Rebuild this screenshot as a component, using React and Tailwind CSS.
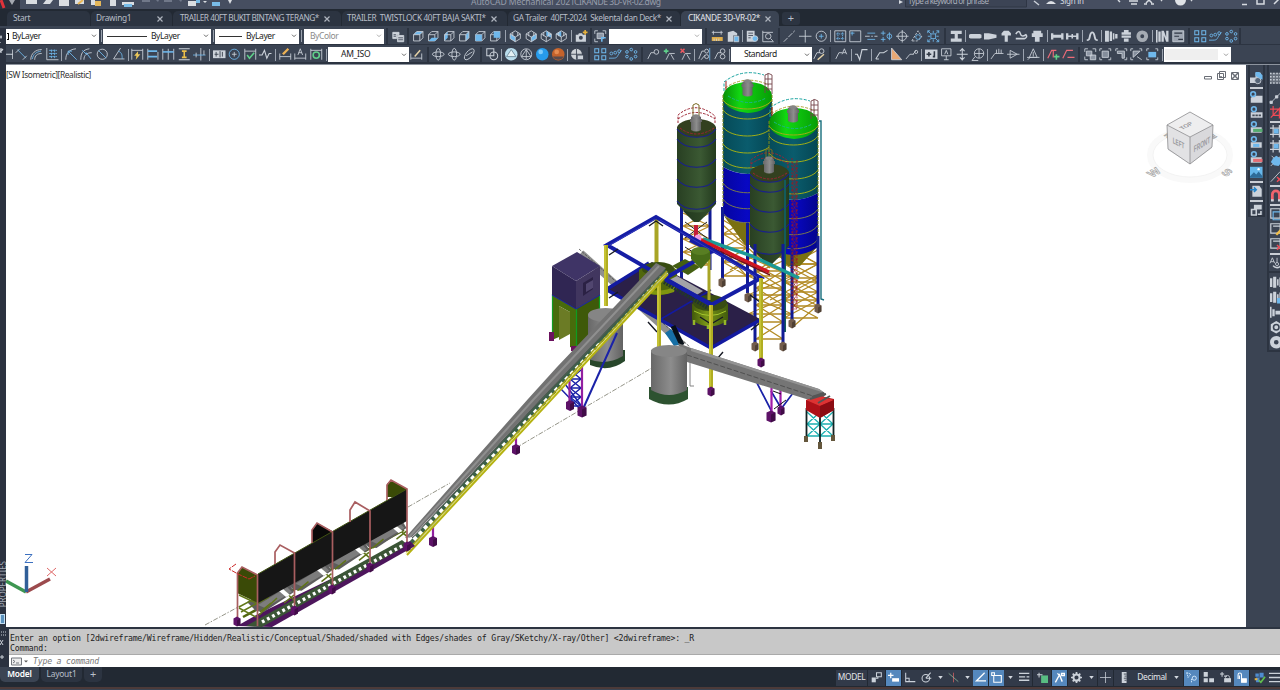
import React from "react";

const W = "#ccd2da";
const B = "#6fb8ec";

const cubeBase = (
  <path d="M2 6l4-4h8v8l-4 4H2zM2 6h8v8M10 6l4-4" />
);
const isoBase = <path d="M8 1l6.500 4v6L8 15l-6.500-4V5zM1.500 5L8 9l6.500-4M8 9v6M4.800 3v5M11.200 3v5" />;
const leader = <path d="M1 14L5 6h4" />;

const GLYPHS = {
  copy: <g><path fill={W} d="M1 3h8v3H6v5H1zM7 7h8v8H7z" /><path stroke="#3b4453" d="M8 10h6M8 12.500h6M2 6h3M2 8h3" /></g>,
  cubeTop: <g><path fill={B} stroke="none" d="M2 6l4-4h8l-4 4z" />{cubeBase}</g>,
  cubeBottom: <g>{cubeBase}<path fill={B} stroke="none" d="M2 14l4-4h8l-4 4z" /></g>,
  cubeLeft: <g><path fill={B} stroke="none" d="M2 6l4-4v8l-4 4z" />{cubeBase}</g>,
  cubeRight: <g><path fill={B} stroke="none" d="M10 6l4-4v8l-4 4z" />{cubeBase}</g>,
  cubeFront: <g>{cubeBase}<path fill={B} stroke="none" d="M2 6h8v8H2z" /></g>,
  cubeBack: <g>{cubeBase}<path fill={B} stroke="none" d="M6 2h8v8H6z" /></g>,
  isoA: <g><path fill={B} stroke="none" d="M1.500 5L8 9v6l-6.500-4z" />{isoBase}</g>,
  isoB: <g><path fill={B} stroke="none" d="M8 9l6.500-4v6L8 15z" />{isoBase}</g>,
  isoC: <g><path fill={B} stroke="none" d="M8 1l6.500 4v5L8 7z" />{isoBase}</g>,
  isoD: <g><path fill={B} stroke="none" d="M8 1v8L1.500 5z" />{isoBase}</g>,
  camera: <g><path fill={W} stroke="none" d="M1 6h3l1-2h4l1 2h4v9H1z" /><circle cx="7.500" cy="10" r="2.500" fill="#3b4453" stroke="none" /><path stroke="#e8b23c" strokeWidth="2" d="M13 0v6M10 3h6" /></g>,
  frame: <g><path d="M1 5V1h4M11 1h4v4M1 11v4h4" /><path fill="#8e97a5" d="M4 4h8v7H4z" /><path fill={B} stroke="none" d="M9 9h6v2h-4v4H9z" /></g>,
  ruler: <g><path fill="#e0ae4a" stroke="none" d="M1 9h14v5H1z" /><path fill={W} d="M1 3h14M3 1v5M13 1v5M4 11v3M7 11v3M10 11v3" /></g>,
  palette: <g><path fill={W} stroke="none" d="M1 3l7-2 5 3v3H8v8H1z" /><path fill={B} d="M9 8h6v7H9z" /></g>,
  list: <g><path fill={W} stroke="none" d="M1 1h10v14H1z" /><path stroke="#3b4453" d="M3 4h6M3 7h6M3 10h3" /><circle cx="11.500" cy="11" r="3.600" fill={B} /></g>,
  magnify: <g><path d="M1 1v14h14M1 3h13" /><circle cx="8" cy="8" r="3.500" /><path d="M11 11l3 3" /></g>,
  line: <path d="M1 15L15 1" strokeDasharray="7 1.500" />,
  plus: <path d="M8 0v16M0 8h16" />,
  circ: <g><circle cx="8" cy="8" r="6.500" /><path stroke={B} d="M8 5v6M5 8h6" /></g>,
  grid: <g><path d="M1 1h14v14H1z" /><path stroke={B} d="M5 3v10M11 3v10M3 5h10M3 11h10" strokeDasharray="2 1" /></g>,
  square: <g><path d="M1 1h14v14H1z" /><path stroke={B} d="M4 2v5M2 4h5" /></g>,
  dashes: <g><path stroke={B} d="M3 4h10M3 12h10" /><path d="M0 8h6M8 8h2M12 8h4" /></g>,
  points: <g stroke={B}><path d="M1 4h6M4 1v6M1 12h6M4 9v6" /><circle cx="12" cy="8" r="3" /><path d="M12 3v10" /></g>,
  target: <g><circle cx="8" cy="8" r="5.500" /><path d="M8 0v16M0 8h16" /></g>,
  rot: <g><path d="M1 14L9 1l5 8-6 5z" strokeDasharray="3 1.500" /><circle cx="9" cy="9" r="3" stroke={B} /></g>,
  burst: <g stroke={B}><path d="M1 1l4 4M15 1l-4 4M1 15l4-4M15 15l-4-4M8 1v3M8 12v3M1 8h3M12 8h3" /><path d="M5 5h6v6H5z" /><path d="M1 4V1h3M12 1h3v3M1 12v3h3M12 15h3v-3" /></g>,
  beam: <path fill={W} stroke="none" d="M1 1h14v4h-5v6h5v4H1v-4h5V5H1z" />,
  bolt: <path fill={W} stroke="none" d="M0 6l2-1h12l2 1v4l-2 1H2l-2-1z" />,
  bolt2: <path fill={W} stroke="none" d="M0 4h6l10 2v4L6 12H0z" />,
  screw: <path fill={W} stroke="none" d="M2 4l3-3h6l3 3v3h-4v8H6V7H2z" />,
  pin: <path strokeWidth="2" d="M1 5c3-4 5-4 6 0s4 3 7 1c2 2 0 5-2 5H1" />,
  nut: <path fill={W} stroke="none" d="M3 1h10v3h2v5h-4v6H5V9H1V4h2z" />,
  shaft: <path fill={W} stroke="none" d="M0 4h3v2h10V4h3v8h-3v-2H3v2H0z" />,
  shaft2: <path fill={W} stroke="none" d="M0 4h3v3h4V5h2v2h4V4h3v8h-3V9H9v2H7V9H3v3H0z" />,
  spring: <path strokeWidth="2.400" d="M1 13c3 0 3-1 4-5s1-5 3-5 2 1 3 5 1 5 4 5" />,
  gear3: <path fill={W} stroke="none" d="M0 1h5v14H0zM6 2h3v12H6zM10 4h2v8h-2zM13 5h3v6h-3z" />,
  stack: <path fill={W} stroke="none" d="M5 0h6v3h3v3H2V3h3zM2 7h12v3H2zM5 11h6v4H5z" />,
  ring: <circle cx="8" cy="8" r="5" stroke="#a5abb3" strokeWidth="5" />,
  plates: <path fill={W} stroke="none" d="M0 0h2v16H0zM3 2h3v13H3zM7 1h3l3 8V1h3v14h-3L10 7v8H7z" />,
  box: <g><path fill="#9ea6b2" d="M1 1h14v14H1z" /><path stroke="#303845" d="M3 4h10M3 8h6M8 12h6" strokeWidth="1.500" /></g>,
  tiles: <g stroke={B} strokeWidth="1.300"><path d="M1 1h5v5H1zM10 1h5v5h-5zM1 10h5v5H1zM10 10h5v5h-5z" /></g>,
  wave: <g stroke={B}><path d="M0 13h5c7 0 4-2 11-10" /><circle cx="3" cy="7" r="1.800" /><circle cx="8" cy="6" r="1.800" /><circle cx="13" cy="4" r="1.800" /></g>,
  dots: <g stroke={B} strokeWidth="1.200"><circle cx="8" cy="2" r="1.700" /><circle cx="13.500" cy="5" r="1.700" /><circle cx="13.500" cy="11" r="1.700" /><circle cx="8" cy="14" r="1.700" /><circle cx="2.500" cy="11" r="1.700" /><circle cx="2.500" cy="5" r="1.700" /></g>,
  dimA: <g><path d="M3 2l11 11" stroke={B} /><path d="M1 6l5-5M10 15l5-5" /></g>,
  arc: <g><path d="M1 15C1 7 7 2 15 2M6 15c0-5 3-8 9-8" /><path stroke={B} d="M3 14C4 8 8 5 14 4" /></g>,
  ord: <g><path d="M1 0v15h15" /><path stroke={B} d="M4 3h10M4 7h10M4 11h10M7 2v11M11 2v11" strokeDasharray="3 1" /></g>,
  rad: <g><path d="M14 1C4 2 1 8 1 15" /><path stroke={B} d="M4 4l11 11M4 9V4h5" /></g>,
  jog: <g><path d="M12 1C3 2 1 8 1 15M5 15c0-6 4-9 10-9" /><path stroke={B} d="M3 3l5 5v-2l6 8" /></g>,
  dia: <g><circle cx="8" cy="8" r="6.500" /><path stroke={B} d="M3 3l10 10" /></g>,
  ang: <g><path d="M11 0L2 14h14" /><path stroke={B} d="M8 4c5 2 5 5 5 10" /></g>,
  quick: <g><path d="M1 1v14M15 1v14M1 3h14" /><path fill="#ecc85a" stroke="none" d="M9 4l-5 6h3l-1 5 6-7H9z" /></g>,
  base: <g><path d="M1 1v14M14 5v10" /><path stroke={B} d="M1 4h12M1 11h12" strokeWidth="2" /></g>,
  cont: <g><path d="M1 1v14M8 1v14M15 1v14" /><path stroke={B} d="M1 5h14" strokeWidth="2" /></g>,
  space: <g><path d="M1 1h14M1 15h14" strokeWidth="1.500" /><path stroke="#ecc04a" strokeWidth="2" d="M8 3v10M5 4h6M5 12h6" /></g>,
  brk: <g><path d="M10 0v16" /><path stroke={B} d="M0 9h16" /><path d="M4 6v6M14 3v6" /></g>,
  tol: <g><path fill={W} stroke="none" d="M0 3h16v10H0z" /><path stroke="#303845" d="M2 8h5M4 5v6M9 4v8M12 5v6" /></g>,
  center: <g><circle cx="8" cy="8" r="6.500" stroke={B} /><path d="M8 5v6M5 8h6" /></g>,
  check: <g><path d="M1 1v14M15 1v14M1 4h14" /><path stroke="#5fd08a" strokeWidth="2" d="M4 9l3 4 6-7" /></g>,
  zig: <path strokeWidth="1.400" d="M0 9h4l3-6 3 10 3-6h3" />,
  dimEdit: <g><path d="M1 7v8M15 7v8M1 11h14" /><path stroke="#eeb254" strokeWidth="3" d="M5 8l7-7" /></g>,
  dimText: <g><path d="M1 7v8M15 7v8M1 13h14" /><path d="M5 9l3-8 3 8M6 6h4" /></g>,
  dimRef: <g><path d="M1 1v14M15 1v14M1 3h14" /><circle cx="8" cy="9" r="4" stroke="#5fd08a" strokeWidth="2" /></g>,
  brush: <g><path d="M1 7v8M15 7v8M1 13h14" /><path stroke="#e6d3a7" strokeWidth="2" d="M6 11l7-8" /></g>,
  orbit: <g><ellipse cx="8" cy="8" rx="7.500" ry="3" /><ellipse cx="8" cy="8" rx="3" ry="7.500" /></g>,
  orbit2: <g><ellipse cx="8" cy="8" rx="8.500" ry="4" transform="rotate(-50 8 8)" /><path d="M4 10l8-5" /></g>,
  shapes: <g strokeWidth="1.300"><path d="M1 1h9v9H1z" /><circle cx="10" cy="10" r="5" /></g>,
  ballIce: <g><circle cx="8" cy="8" r="8" fill="#b9dded" stroke="none" /><path stroke="#6c8798" d="M8 2l6 9H2z" fill="#e4f1f5" /></g>,
  ballWire: <g><circle cx="8" cy="8" r="7" /><path d="M8 2l6 9H2zM8 2v12" /></g>,
  ballBlue: <g><circle cx="8" cy="8" r="8" fill="#279bea" stroke="none" /><circle cx="6" cy="5" r="3" fill="#7ccaf9" stroke="none" /></g>,
  ballOrange: <g><circle cx="8" cy="8" r="8" fill="#c4622b" stroke="none" /><path d="M1 11h14a8 8 0 01-14 0" fill="#584b4d" stroke="none" /><circle cx="6" cy="5" r="3" fill="#e48b50" stroke="none" /></g>,
  ballSet: <g><circle cx="7" cy="8" r="7" fill="#cfd3d8" stroke="none" /><path d="M7 1v14M0 8h14" stroke="#3b4453" /><path fill={W} stroke="#3b4453" d="M8 9h8v6H8z" /></g>,
  lead: <g>{leader}<circle cx="12" cy="5" r="3" /></g>,
  leadAdd: <g><path d="M4 15l4-8h7M10 8l4 7" /><path stroke="#5fd08a" strokeWidth="2" d="M4 1v6M1 4h6" /></g>,
  leadDel: <g><path d="M4 15l4-8h7M10 8l4 7" /><path stroke="#ea5a62" strokeWidth="2" d="M2 1l5 5M7 1L2 6" /></g>,
  leadAl: <g><path d="M1 14L5 4h3M4 15l5-6" /><circle cx="11" cy="4" r="2.500" /><circle cx="11" cy="11" r="2.500" /><path stroke={B} d="M15 0v16" /></g>,
  leadCol: <g>{leader}<circle cx="11" cy="4" r="3" /><circle cx="11" cy="11" r="3" /></g>,
  leadBr: <g>{leader}<circle cx="11" cy="4" r="3" /><path stroke="#e6d3a7" strokeWidth="2" d="M6 15l8-7" /></g>,
  leadText: <g>{leader}<path d="M9 8l3-7 3 7M10 6h4" /></g>,
  root: <path strokeWidth="1.500" d="M0 8h3l3 7L9 2h7" />,
  weld: <path strokeWidth="1.300" d="M1 14L6 6h5l5-3M1 14h4" />,
  edge: <path fill="#e9a873" stroke={W} d="M2 0v15h13z" />,
  noteA: <g><path d="M0 14l5-6h5M9 8l4-5" /><circle cx="13" cy="5" r="2" /></g>,
  datum: <g><path fill={W} stroke="none" d="M0 2h16v12H0z" /><path stroke="#303845" strokeWidth="2" d="M2 8h6M5 5v6M12 4v7h-2" /></g>,
  datumA: <g><path d="M2 1h12v9H2zM8 10v5M5 15h6M6 8l2-5 2 5" /></g>,
  surf: <path strokeWidth="1.300" d="M8 0v16M1 8h14M5 4l3-3 3 3M5 12l3 3 3-3" />,
  feat: <g><circle cx="9" cy="7" r="6" /><path d="M9 1v12M3 7h12M4 11l-4 5h8" /></g>,
  seam: <g><path d="M0 14l5-7h11M7 2v5M10 1v6M13 2v5" /></g>,
  arrowR: <path d="M0 8h16M4 3l9 5-9 5z" />,
  tri: <g><path d="M3 12L8 1l5 11zM0 12h16M8 5v6M1 15l3-3" /></g>,
  balAdd: <g stroke="#ed6b78"><path strokeWidth="1.500" d="M1 13L6 3h6M8 3v9" /><path stroke="#5fd08a" strokeWidth="2" d="M12 8v7M9 11h7" /></g>,
  balDel: <g stroke="#ed6b78"><path strokeWidth="1.500" d="M1 13L6 3h8M7 12h9" /></g>,
  grp: <g><path d="M1 5V1h4M1 11v4h4M15 5V1h-4" /><path fill="#8e97a5" d="M3 4h7v6H3zM8 9h7v6H8z" /></g>,
  grp2: <g><path d="M1 4V1h3M12 1h3v3M1 12v3h3M12 15h3v-3" /><path fill="#848d9b" d="M4 4h8v8H4z" /></g>,
  grp3: <g><path d="M1 4V1h3M12 1h3v3M12 15h3v-3" /><path fill="#848d9b" d="M3 4h9v9H9V7H3z" /></g>,
  grp4: <g><path d="M1 4V1h3M12 1h3v3M1 12v3h3" /><path fill="#848d9b" d="M4 4h9l-9 8zM9 11l6 4" /></g>,
  grp5: <g><path d="M1 4V1h3M12 1h3v3M1 12v3h3M12 15h3v-3" /><path fill={B} stroke="none" d="M3 5h10v7H3z" /></g>,
  snap: <path strokeWidth="1.300" d="M1 2v12M15 2v12M1 8h14" />,
  layers: <g><path fill={W} stroke="none" d="M0 7h9v7H0zM7 1h7v9H7z" /><circle cx="10" cy="11" r="4" fill="#566476" /><path fill={B} stroke="none" d="M7 0h5l4 4v6l-9-5z" /></g>,
  link: <g><path fill={W} stroke="none" d="M4 6h12v9H1V9z" /><circle cx="4" cy="4" r="3" stroke={B} strokeWidth="2" /></g>,
  linkG: <g><path fill={W} stroke="none" d="M1 8h14v7H1z" /><path fill="#55ab6f" stroke="none" d="M4 10h12v4H4z" /><circle cx="5" cy="4" r="3" stroke={B} strokeWidth="2" /></g>,
  linkB: <g><path fill={W} stroke="none" d="M1 8h14v7H1z" /><path fill={B} stroke="none" d="M4 10h8v4H4z" /><circle cx="5" cy="4" r="3" stroke={B} strokeWidth="2" /></g>,
  linkR: <g><path fill={W} stroke="none" d="M1 8h14v7H1z" /><path fill="#e46d74" stroke="none" d="M4 10h12v4H4z" /><circle cx="5" cy="4" r="3" stroke={B} strokeWidth="2" /></g>,
  dwg: <g><path fill={W} stroke="none" d="M1 8h15v7H1z" /><path stroke="#454c57" strokeWidth="2" d="M3 12h11" strokeDasharray="3 1" /><circle cx="5" cy="4" r="3" stroke={B} strokeWidth="2" /></g>,
  image: <g><path fill="#66b7eb" stroke="none" d="M0 1h16v14H0z" /><path fill="#2e6c99" stroke="none" d="M0 13l5-5 3 3 3-4 5 6v2H0z" /><circle cx="11" cy="4" r="1.500" fill="#fff" stroke="none" /></g>,
  import: <g><path fill={W} stroke="none" d="M3 1h9l3 4v10H3z" /><path stroke="#2584c9" strokeWidth="2" d="M0 6h8M5 3l3 3-3 3" /></g>,
  exportI: <g><path fill={W} stroke="none" d="M5 1h10v6H5z" /><path stroke={W} strokeWidth="2" d="M2 7h6v7H2zM10 13h4V9" /></g>,
  hatch: <g><path d="M0 1h16v14H0z" fill="#676f7b" stroke="none" /><path d="M0 2h16M0 6h16M0 10h16M0 14h16" strokeDasharray="2 2" strokeWidth="2" /></g>,
  poly: <g><path d="M1 15L15 1" /><path fill={W} d="M0 13h3v3H0zM7 6h3v3H7z" /></g>,
  redX: <g stroke="#ef4a56" strokeWidth="1.500"><path d="M4 0v12h12M0 4h12v12M14 1L1 15" /></g>,
  blueGrid: <g><path strokeWidth="1.500" d="M4 0v16M12 0v16M0 4h16M0 12h16" /><path fill={B} stroke="none" d="M5 5h6v6H5z" /></g>,
  blueStar: <g><path fill={B} stroke="none" d="M4 4l4-3 5 3 2 5-4 5-6-1-4-4z" /><path d="M2 1l3 3M14 1l-3 3M1 14l3-3" /></g>,
  lineX: <g><path d="M1 15L13 2" /><path stroke="#ef4a56" strokeWidth="2" d="M9 9l6 6M15 9l-6 6" /></g>,
  magnet: <g><path stroke="#f0646d" strokeWidth="3.500" d="M3 15V7a4.500 4.500 0 019 0v8" /><path strokeWidth="3.500" d="M3 13v3M12 13v3" /></g>,
  rects: <g strokeWidth="1.500"><path d="M1 1h12v12H1z" /><path stroke={B} d="M4 5h11v10H4z" /></g>,
  rectsE: <g strokeWidth="1.500"><path d="M1 1h12v12H1zM4 4h9" /><path stroke="#efbd4b" strokeWidth="3" d="M8 15l7-7" /></g>,
  rectsX: <g strokeWidth="1.500"><path d="M1 1h12v12H1zM4 4h9" /><path stroke="#ef4a56" strokeWidth="2" d="M9 9l6 6M15 9l-6 6" /></g>,
  textC: <g><path d="M0 8l3-7 3 7M1 6h4M9 1v6" /><path strokeWidth="2" d="M14 4a6 6 0 11-10 7" /><circle cx="9" cy="9" r="2" /></g>,
  boltGrp: <path fill={W} stroke="none" d="M0 3h3v11H0zM4 1h4v14H4zM9 4h2v8H9zM12 2h4v12h-4z" />,
  boltGrpB: <g><path fill={W} stroke="none" d="M0 3h3v11H0zM4 1h4v14H4zM9 4h2v8H9zM12 2h4v8h-4z" /><path fill={B} stroke="none" d="M9 9h7v7H9z" /></g>,
  boltS: <path fill={W} stroke="none" d="M0 1h2v14H0zM3 4h3v9H3zM7 6h9v5H7z" />,
  nutHex: <g><path fill={W} stroke="none" d="M8 0l7 4v8l-7 4-7-4V4z" /><circle cx="8" cy="8" r="3.500" stroke="#3b4453" strokeWidth="2" /></g>,
  washer: <circle cx="8" cy="8" r="5.500" strokeWidth="5" />,
  modelMap: <g><path fill={W} stroke="none" d="M1 8h6v7H1z" /><path d="M8 1h7v6H8zM7 9h3V7" strokeWidth="1.500" /></g>,
  dyn: <g><path stroke="#fff" strokeWidth="1.800" d="M4 1v8M0 5h8" /><path fill="#fff" stroke="none" d="M6 9h10v5H6z" /></g>,
  ortho: <path strokeWidth="1.500" d="M1 1v13h14M1 9h5v5" />,
  polar: <g><circle cx="7" cy="9" r="5.500" strokeWidth="1.500" /><path strokeWidth="1.500" d="M7 9h8M7 9l7-8" /></g>,
  iso: <g><path d="M8 1v14" stroke="#d45f61" /><path stroke="#8fb79a" d="M1 2l14 12" /></g>,
  angle: <path stroke="#fff" strokeWidth="1.800" d="M14 1L2 13h14" />,
  osnap: <path stroke="#fff" strokeWidth="1.500" d="M4 5h11v10H4zM1 1h4v4H1z" />,
  lines: <path strokeWidth="2" d="M0 2h15M0 7h9M11 7h4M0 12h15" />,
  sel: <g><path fill="#58bd82" stroke="none" d="M6 5h10v11H6z" /><path strokeWidth="1.500" d="M3 1v7M0 4h8" /></g>,
  anno: <path stroke="#fff" strokeWidth="2" d="M2 15L8 4l4 10M5 2l4 4M11 2h4v3h-4z" />,
  gear: <g><circle cx="8" cy="8" r="4.500" strokeWidth="3" /><path strokeWidth="2.500" d="M8 0v3M8 13v3M0 8h3M13 8h3M2.500 2.500l2 2M11.500 11.500l2 2M13.500 2.500l-2 2M4.500 11.500l-2 2" /></g>,
  scaleV: <g><path fill={W} stroke="none" d="M4 0h7v16H4z" /><path stroke="#303845" strokeWidth="1.200" d="M7 3h4M8 6h3M7 9h4M8 12h3" /></g>,
  triCirc: <g stroke="#d9edff" strokeWidth="1.300"><path d="M1 1l6 2-4 5zM8 15V9" strokeDasharray="2 1" /><circle cx="12" cy="9" r="3" /></g>,
  blocks: <path fill={W} stroke="none" d="M1 0h6v7H1zM1 9h6v6H1zM9 9h7v6H9z" />,
  lockT: <g><path strokeWidth="1.500" d="M3 0v7M0 3h6M6 6h4" /><path fill={W} stroke="none" d="M6 9h10v6H6z" /><circle cx="11" cy="8" r="3" /></g>,
  clip: <g stroke="#fff" strokeWidth="1.500"><path d="M3 10V4a2.500 2.500 0 015 0v7M5 10V5" /><path fill="#fff" d="M8 10h7v5H8z" /></g>,
  hw: <g><path fill="#4f8ccf" stroke="none" d="M2 2h5v5H2zM8 1h6v7H8zM3 8h5v7H3z" /><path stroke="#62c04f" strokeWidth="2.500" d="M7 12l3 3 6-8" /><path fill="#e3b242" stroke="none" d="M1 9h4v3H1z" /></g>,
  menu: <path strokeWidth="2" d="M0 2h16M0 8h16M0 14h16" />,
};

function Icon({ n, className = "size-[12.500px]" }) {
  return (
    <svg viewBox="0 0 16 16" fill="none" stroke={W} strokeWidth="1.100" className={className + " shrink-0 overflow-visible"}>
      {GLYPHS[n]}
    </svg>
  );
}

function Group({ names, className }) {
  return (
    <div className={"flex h-full shrink-0 items-center justify-around " + className}>
      {names.split(" ").map((n, i) => <Icon key={i} n={n} />)}
    </div>
  );
}

function Gap({ className, dark }) {
  return (
    <div className={"flex h-full shrink-0 items-center justify-center " + className}>
      <div className={dark ? "h-full w-[2px] bg-[#2c3441]" : "h-[12px] w-px bg-[#9aa2ae]"} />
    </div>
  );
}

function Chevron({ className = "text-[#666]" }) {
  return (
    <svg viewBox="0 0 8 6" className={"h-[4px] w-[6px] shrink-0 " + className} fill="none" stroke="currentColor" strokeWidth="1.500">
      <path d="M1 1l3 3 3-3" />
    </svg>
  );
}

function Combo({ className, children, chevron, track = "tracking-[-0.420px]" }) {
  return (
    <div className={"flex h-[15px] shrink-0 items-center bg-white pr-[2px] text-[8.500px] text-[#222] " + track + " " + className}>
      {children}
      <span className="grow" />
      <Chevron className={chevron} />
    </div>
  );
}

function Tab({ className, label, closable = true, active, textClass = "tracking-[-0.300px]" }) {
  return (
    <div className={"flex h-full shrink-0 items-center justify-between whitespace-nowrap rounded-t-[5px] text-[8.300px] " + (active ? "bg-[#3b4453] text-[#e3e6eb] " : "bg-[#2c3441] text-[#b8bec8] ") + className}>
      <span className={textClass}>{label}</span>
      {closable && (
        <svg viewBox="0 0 6 6" className="size-[6px]" stroke="#aeb4be" strokeWidth="1.200"><path d="M0.500 0.500l5 5M5.500 0.500l-5 5" /></svg>
      )}
    </div>
  );
}

function TitleBar() {
  return (
    <div className="flex h-[9px] shrink-0 items-end overflow-hidden bg-[#464e60]">
      <svg viewBox="0 0 700 9" className="h-[9px] w-[700px] shrink-0">
        <path fill="#2b303c" d="M0 0h20v9H0z" />
        <path d="M1 0l3 8" stroke="#e0323a" strokeWidth="3" />
        <path fill="#d8dce1" d="M9 0h6l-3 5z" opacity=".7" />
        <path fill="#dadde1" d="M26 0h11v4H26zM59 0h10v6H59zM110 0h6v6h-6zM122 2h12v3h-12zM188 1h8v5h-8z" />
        <path fill="#dadde1" d="M43 4l3-4h7l-3 4z" />
        <path fill="#dadde1" d="M75 0h9v4h-9zM91 0h4v5h-4z" />
        <path d="M78 4l5-4" stroke="#eab654" strokeWidth="2" />
        <path fill="#e5b75a" d="M95 1h6v5h-6z" />
        <path fill="#79bce8" d="M124 4h8v3h-8zM212 2h8v4h-8zM196 0h4v3h-4z" />
        <path fill="#dadde1" d="M228 0h4l-2 4zM203 1h4l-2 2z" />
        <path fill="#707889" d="M142 0h8v2h-8zM156 0h3l-1 2zM164 0h8v2h-8zM179 0h3l-1 2z" />
        <text x="471" y="4.500" fontFamily="Noto Sans, sans-serif" fontSize="8.600" fill="#979dab" textLength="104">AutoCAD Mechanical 2021</text>
        <text x="574" y="4.500" fontFamily="Noto Sans, sans-serif" fontSize="8.600" fill="#979dab" textLength="87">CIKANDE 3D-VR-02.dwg</text>
      </svg>
      <svg viewBox="700 0 580 9" className="h-[9px] w-[580px] shrink-0">
        <path fill="#d6dae0" d="M899 0l4 2-4 2z" />
        <path d="M905.500 0v7h121V0" fill="#3c4455" stroke="#2f3645" />
        <text x="908" y="4" fontFamily="Noto Sans, sans-serif" fontSize="8" fill="#a8aeb9" textLength="81">Type a keyword or phrase</text>
        <path d="M1034 1l5 4" stroke="#cbd0d8" strokeWidth="1.500" />
        <path fill="#dde0e5" d="M1046 4q5-6 10 0z" />
        <text x="1060" y="4" fontFamily="Noto Sans, sans-serif" fontSize="8" fill="#d6dae0" textLength="24">Sign in</text>
        <path d="M1118 0l2 2M1129 1h9M1131 4h6M1146 3l3-3 3 3M1144 4h3M1151 4h3" stroke="#d6dae0" strokeWidth="1.500" fill="none" />
        <circle cx="1180.500" cy="0" r="5.500" fill="#dfe2e6" />
        <path d="M1161 0l1 1M1191 0l1 1M1242 4.500h5M1257 0v4h7v-4M1274 4l5-5" stroke="#d6dae0" strokeWidth="1.500" fill="none" />
      </svg>
    </div>
  );
}

function TabBar() {
  return (
    <div className="flex h-[17px] shrink-0 items-end bg-[#222933] pl-[7px]">
      <div className="flex h-[15px] items-center">
        <Tab className="w-[83px] px-[6px]" label="Start" closable={false} />
        <Tab className="ml-px w-[81px] pl-[5px] pr-[9px]" label="Drawing1" />
        <Tab className="ml-px w-[168px] pl-[7px] pr-[11px]" label="TRAILER 40FT BUKIT BINTANG TERANG*" textClass="tracking-[-0.500px]" />
        <Tab className="ml-px w-[165px] pl-[5px] pr-[10px]" label={"TRAILER\u00a0 TWISTLOCK 40FT BAJA SAKTI*"} textClass="tracking-[-0.390px]" />
        <Tab className="ml-px w-[172px] pl-[5px] pr-[8px]" label={"GA Trailer\u00a0 40FT-2024\u00a0 Skelental dan Deck*"} textClass="tracking-[-0.400px]" />
        <Tab className="ml-px w-[98px] pl-[7px] pr-[8px]" label="CIKANDE 3D-VR-02*" active textClass="tracking-[-0.350px]" />
        <div className="ml-[3px] flex h-[13px] w-[18px] items-center justify-center rounded-[3px] bg-[#2c3441] text-[11px] text-[#b9bfc9]">+</div>
      </div>
    </div>
  );
}

function EdgeMarks({ d }) {
  return (
    <div className="h-[19px] w-[6px] shrink-0 self-start bg-[#2b3240]">
      <svg viewBox="0 0 6 19" className="h-[19px] w-[6px]" fill="none" stroke="#cbd0d7" strokeWidth="1.200"><path d={d} /></svg>
    </div>
  );
}

function ToolRowOne() {
  return (
    <div className="flex h-[19px] items-center border-b border-[#2c3441] pt-[2px]">
      <EdgeMarks d="M0 9h2M1 7.500v3M0 14v1" />
      <Combo className="w-[93px] pl-[1px]"><span className="mr-[3px] h-[7px] w-[2px] border-y border-r border-black" />ByLayer</Combo>
      <Gap className="w-[4px]" />
      <Combo className="w-[108px] pl-[4px]"><span className="mr-[4px] h-px w-[40px] bg-[#333]" />ByLayer</Combo>
      <Gap className="w-[4px]" />
      <Combo className="w-[84px] pl-[4px]"><span className="mr-[4px] h-px w-[23px] bg-[#333]" />ByLayer</Combo>
      <Gap className="w-[5px]" />
      <Combo className="w-[80px] pl-[6px]" chevron="text-[#aaa]"><span className="text-[#8a8a8a]">ByColor</span></Combo>
      <Gap className="w-[6px]" dark />
      <Group className="w-[16px]" names="copy" />
      <Gap className="w-[4px]" dark />
      <Group className="w-[93px]" names="cubeTop cubeBottom cubeLeft cubeRight cubeFront cubeBack" />
      <Gap className="w-[5px]" />
      <Group className="w-[61px]" names="isoA isoB isoC isoD" />
      <Gap className="w-[4px]" />
      <Group className="w-[16px]" names="camera" />
      <Gap className="w-[4px]" dark />
      <Group className="w-[15px]" names="frame" />
      <div className="w-px" />
      <Combo className="w-[93px]" chevron="text-[#aaa]" />
      <Gap className="w-[7px]" dark />
      <Group className="w-[32px]" names="ruler palette" />
      <Gap className="w-[3px]" />
      <Group className="w-[32px]" names="list magnify" />
      <Gap className="w-[5px]" dark />
      <Group className="w-[48px]" names="line plus circ" />
      <Gap className="w-[3px]" />
      <Group className="w-[109px]" names="grid square dashes points target rot burst" />
      <Gap className="w-[7px]" dark />
      <Group className="w-[16px]" names="beam" />
      <Gap className="w-[3px]" />
      <Group className="w-[78px]" names="bolt bolt2 screw pin nut" />
      <Gap className="w-[4px]" />
      <Group className="w-[31px]" names="shaft shaft2" />
      <Gap className="w-[4px]" />
      <Group className="w-[16px]" names="spring" />
      <Gap className="w-[3px]" />
      <Group className="w-[47px]" names="gear3 stack ring" />
      <Gap className="w-[4px]" />
      <Group className="w-[32px]" names="plates box" />
      <Gap className="w-[6px]" dark />
      <Group className="w-[47px]" names="tiles wave dots" />
      <div className="h-full w-[2px] bg-[#2c3441]" />
    </div>
  );
}

function ToolRowTwo() {
  return (
    <div className="flex h-[19px] items-center border-b-2 border-[#2c3441] pt-[2px]">
      <EdgeMarks d="M0 3h3M1 1v5M0 5l3-3" />
      <div className="flex w-[7px] shrink-0 justify-end overflow-hidden"><Icon n="snap" /></div>
      <Group className="w-[47px]" names="dimA arc ord" />
      <Gap className="w-[3px]" />
      <Group className="w-[63px]" names="rad jog dia ang" />
      <Gap className="w-[4px]" />
      <Group className="w-[77px]" names="quick base cont space brk" />
      <Gap className="w-[4px]" />
      <Group className="w-[62px]" names="tol center check zig" />
      <Gap className="w-[4px]" />
      <Group className="w-[47px]" names="dimEdit dimText dimRef" />
      <Gap className="w-[4px]" />
      <Combo className="w-[81px] pl-[13px]" track="tracking-[-0.300px]">AM_ISO</Combo>
      <Group className="w-[15px]" names="brush" />
      <Gap className="w-[7px]" dark />
      <Group className="w-[46px]" names="orbit orbit orbit2" />
      <Gap className="w-[7px]" dark />
      <Group className="w-[16px]" names="shapes" />
      <Gap className="w-[3px]" />
      <Group className="w-[63px]" names="ballIce ballWire ballBlue ballOrange" />
      <Gap className="w-[3px]" />
      <Group className="w-[16px]" names="ballSet" />
      <Gap className="w-[7px]" dark />
      <Group className="w-[47px]" names="tiles wave dots" />
      <Gap className="w-[6px]" dark />
      <Group className="w-[48px]" names="lead leadAdd leadDel" />
      <Gap className="w-[3px]" />
      <Group className="w-[32px]" names="leadAl leadCol" />
      <Gap className="w-[3px]" />
      <Combo className="w-[81px] pl-[13px]" track="tracking-[-0.450px]">Standard</Combo>
      <Group className="w-[15px]" names="leadBr" />
      <Gap className="w-[6px]" dark />
      <Group className="w-[16px]" names="leadText" />
      <Gap className="w-[4px]" />
      <Group className="w-[16px]" names="root" />
      <Gap className="w-[4px]" />
      <Group className="w-[47px]" names="weld edge noteA" />
      <Gap className="w-[3px]" />
      <Group className="w-[63px]" names="datum datumA surf feat" />
      <Gap className="w-[3px]" />
      <Group className="w-[32px]" names="seam arrowR" />
      <Gap className="w-[4px]" />
      <Group className="w-[16px]" names="tri" />
      <Gap className="w-[4px]" />
      <Group className="w-[31px]" names="balAdd balDel" />
      <Gap className="w-[6px]" dark />
      <Group className="w-[78px]" names="grp grp2 grp3 grp4 grp5" />
      <Gap className="w-[4px]" />
      <Combo className="w-[67px] pl-px" chevron="text-[#999]"><span className="h-[11px] w-[53px] bg-[#efefef]" /></Combo>
    </div>
  );
}

/* ---------- 3D model ---------- */

function Ring({ x1, x2, y, d = 8, c, w = 1 }) {
  return <path d={`M${x1} ${y}C${x1 + 8} ${y + d} ${x2 - 8} ${y + d} ${x2} ${y}`} fill="none" stroke={c} strokeWidth={w} />;
}

function Foot({ x, y, c = "#5d1267", s = 8 }) {
  return (
    <g>
      <path fill={c} d={`M${x - s / 2} ${y - s / 2 + 1}l${s / 2}-2l${s / 2} 2v${s - 1}l${-s / 2} 2l${-s / 2}-2z`} />
      <path fill="#000" opacity=".3" d={`M${x} ${y - s / 2 + 3}l${s / 2}-2v${s - 1}l${-s / 2} 2z`} />
    </g>
  );
}

function Motor({ x, y }) {
  return (
    <g>
      <path fill="url(#steel)" d={`M${x - 5} ${y + 2}q5-4 10 0v13q-5 3-10 0z`} />
      <path fill="url(#steel)" d={`M${x - 6} ${y + 4}h12v3h-12z`} />
      <ellipse cx={x} cy={y + 1} rx="3.500" ry="1.800" fill="#858585" />
    </g>
  );
}

function BigSilo({ x, y, mid, end }) {
  const r = x + 49;
  return (
    <g>
      <path fill="url(#teal)" d={`M${x} ${y}H${r}V${mid}q-24 14-49 0z`} />
      <path fill="url(#blue)" d={`M${x} ${mid}q24 14 49 0V${end}q-24 16-49 0z`} />
      <path fill="url(#green)" d={`M${x} ${y}q2-8 12-11q13-4 26 0q10 4 11 11v5q-6 12-24 13q-20-2-25-13z`} />
      {[5, 15, 32, 49, 64].map((o) => <Ring key={o} x1={x} x2={r} y={y + o} d={12} c="#9fae16" />)}
      {[88, 104, 118].map((o) => <Ring key={o} x1={x} x2={r} y={y + o} d={13} c="#77774f" />)}
      <path d={`M${x} ${y}V${end}M${r} ${y}V${end}`} stroke="#7f8a1a" strokeWidth="1" strokeDasharray="3 1" />
      <path d={`M${x + 1} ${y - 4}v-9q18-14 40-7`} fill="none" stroke="#18a3a0" strokeDasharray="3 1.500" strokeWidth="1" />
      <path d={`M${x + 2} ${y - 7}q20-14 44-3`} fill="none" stroke="#b2a23a" strokeDasharray="3 1.500" strokeWidth="1" />
      <path d={`M${x + 5} ${y + 1}q20 12 38 2`} fill="none" stroke="#1ab38e" strokeDasharray="3 1.500" strokeWidth="1" />
      <path d={`M${x + 3} ${y - 5}v-9`} stroke="#9b1a1a" />
      <path d={`M${r - 7} ${y - 2}v-18q4-3 7 0v19M${r - 4} ${y - 4}v-18M${r - 7} ${y - 16}h7M${r - 7} ${y - 11}h7M${r - 7} ${y - 6}h7`} stroke="#75444b" strokeWidth=".9" fill="none" />
    </g>
  );
}

function SmallSilo({ x, y, end }) {
  const r = x + 39;
  return (
    <g>
      <path fill="url(#olive)" d={`M${x} ${y}H${r}V${end}L${x + 28} ${end + 12}L${x + 20} ${end + 17}L${x + 12} ${end + 12}L${x} ${end}z`} />
      <ellipse cx={x + 19.500} cy={y + 1} rx="19.500" ry="9" fill="#33401f" />
      <path fill="url(#cone)" d={`M${x + 5} ${end + 6}q15 5 29 0l-12 12h-5z`} />
      {[2, 12, 32, 52, 74].map((o) => <Ring key={o} x1={x} x2={r} y={y + o} d={11} c="#191f8c" w={1.200} />)}
      <path d={`M${x + 1} ${y - 4}v-8q18-15 37 1v8M${x + 1} ${y - 8}q18-13 37 0M${x + 3} ${y + 1}q16 12 34 0`} fill="none" stroke="#9c2432" strokeDasharray="2.500 1.300" strokeWidth="1" />
      <path d={`M${x + 16} ${y - 9}v-13q3-3 6 0v14`} fill="none" stroke="#7b6b25" />
    </g>
  );
}

function lattice(x1, x2, top, bottom, step) {
  let d = "";
  for (let y = top; y + step <= bottom; y += step) {
    d += `M${x1} ${y}L${x2} ${y + step}M${x2} ${y}L${x1} ${y + step}M${x1} ${y + step}H${x2}`;
  }
  return d;
}

function Plant() {
  return (
    <g>
      <path d="M205 625L240 606M408 507L450 483M514 449L640 375L680 351" stroke="#78786a" strokeWidth=".8" strokeDasharray="5 1.500 1.500 1.500" fill="none" />
      {/* rear feed conveyor */}
      <path d="M581 253L683 345" stroke="#8f8f8f" strokeWidth="7" />
      <path d="M579 249L690 347" stroke="#4c4c4c" strokeWidth=".8" strokeDasharray="3 1" />
      {/* silo towers */}
      <g fill="none" stroke="#b38b25" strokeWidth="1.300">
        <path d={lattice(723, 747, 220, 276, 14)} />
        <path d={lattice(748, 792, 238, 316, 19)} />
        <path d={lattice(784, 818, 246, 318, 18)} />
        <path d={lattice(792, 818, 250, 306, 14)} />
        <path d={lattice(756, 783, 254, 343, 17)} />
        <path d="M723 225L770 268M724 250L748 278M730 270L790 235M795 325L818 305M770 300L818 275M750 262L818 300" />
      </g>
      <path fill="#7a7011" d="M724 216q24 14 48 0l-17 29h-10zM770 246q24 14 48 0l-18 20h-12z" />
      <BigSilo x={723} y={95} mid={167} end={215} />
      <BigSilo x={769} y={121} mid={193} end={247} />
      <Motor x={747.500} y={80} />
      <Motor x={793} y={106} />
      <path d="M819 121h2v178l3 1" fill="none" stroke="#176e7c" strokeWidth="1.400" />
      <g stroke="#111b94" strokeWidth="3"><path d="M722.500 207V280M747.500 223V293M792 248V320M818 236V306" /></g>
      <path d="M792 158V312M797 160V308" stroke="#a01522" strokeWidth=".9" strokeDasharray="2 1.500" />
      <path d={lattice(792, 797, 162, 310, 7)} stroke="#a01522" strokeWidth=".6" fill="none" />
      <SmallSilo x={750} y={172} end={246} />
      <Motor x={769} y={157} />
      <path d="M785 180V332" stroke="#125b5b" strokeWidth="2" />
      <g stroke="#111b94" strokeWidth="3"><path d="M755 244V343M783 244V343" /></g>
      <path d={lattice(683, 710, 213, 277, 13)} stroke="#b98c28" fill="none" strokeWidth="1.300" />
      <path d="M685 222l22 16M707 222l-22 16M685 247l22 14" stroke="#222" />
      <path d="M681.500 202V280M710 202V270" stroke="#111b94" strokeWidth="3" />
      <SmallSilo x={677} y={127} end={204} />
      <Motor x={696} y={115} />
      {[[722, 282], [748, 297], [755, 346], [783, 346], [792, 323], [818, 308]].map(([x, y]) => <Foot key={x} x={x} y={y} c="#725c4b" s={7} />)}
      {/* screw conveyors */}
      <path d="M703 239L752 256L799 278" stroke="#1b9a96" strokeWidth="3.500" fill="none" />
      <path d="M699 239L769 272" stroke="#d01521" strokeWidth="3.500" />
      <path d="M702 243L770 275" stroke="#761019" strokeWidth="1.500" />
      <path d="M696 225v12" stroke="#c31d36" strokeWidth="4" /><circle cx="698" cy="238" r="3.500" fill="#ee9be0" />
      {/* operator cabin */}
      <path fill="#486b0b" d="M552 294l25 14v42l-7-3v-35l-11-6v31l-7 3z" />
      <path fill="#3e5909" d="M577 308l23-14v39l-23 16z" /><path fill="#6b7b25" d="M559 306l11 6v22l-11 6z" />
      <path d="M552.500 294v45M576.500 308v42M599.500 295v20" stroke="#0f9c22" strokeWidth="1.200" />
      <path fill="#3f3466" d="M552 266l25-14l23 14l-24 15z" />
      <path fill="#302653" d="M552 266l24 15v28l-24-14z" />
      <path fill="#41365f" d="M600 266l-24 15v28l24-14z" />
      <path fill="#2b2144" d="M583 283l10-6v12l-10 7z" /><path fill="#51466f" d="M586 284l7-4v8l-7 4z" />
      <path d="M552 295l24 14l24-14" stroke="#1926a4" fill="none" />
      <path fill="#6b125f" d="M549 332h5v9h-5zM571 346h7v5h-7z" />
      {/* water tanks */}
      <path fill="#28472b" d="M590 350h35v11q-16 12-35 4z" />
      <path fill="url(#steel)" d="M588 314h35v42q-17 10-35 3z" /><ellipse cx="605.500" cy="315" rx="17.500" ry="7" fill="#858585" />
      {/* platform */}
      <path fill="#2b2048" d="M607 289l45-27l108 57l-49 29z" />
      <g fill="none" stroke="#131aa0" strokeWidth="3.500">
        <path d="M607 289L649 263M607 290L711 348L760 320" />
        <path d="M661 319L711 290" strokeWidth="1.500" />
      </g>
      <path d="M656.500 217V265" stroke="#a8a526" strokeWidth="4" />
      <path fill="#50670c" d="M639 270q20-15 38 0v19q-18 12-38 0z" /><ellipse cx="658" cy="269" rx="16" ry="7" fill="#384c12" />
      <path fill="#80960f" d="M641 286q17 9 35 0l-2 6q-15 6-31 0z" />
      <path fill="url(#tank)" d="M692 304q18-14 36 0v16q-18 13-36 0z" />
      <ellipse cx="710" cy="303" rx="17" ry="8" fill="#384c12" />
      <path d="M694 311q16 9 32 0" stroke="#a3c52c" fill="none" strokeWidth="1" />
      <path d="M694 320v5M725 320v5M708 325v4" stroke="#94b628" strokeWidth="2.500" />
      <path fill="#445f12" d="M672 266l13-7l15 8l-12 8z" />
      <path fill="#a3a3a8" d="M669 280l8-4l26 15l-8 5z" />
      <path d="M664 282L708 308" stroke="#22372c" strokeWidth="4" strokeDasharray="2 1" />
      <path d="M709 252V300" stroke="#a8a526" strokeWidth="3" />
      <g fill="none" stroke="#151da5" strokeWidth="4">
        <path d="M607 245L656 217L761 278L711 305Z" />
        <path d="M664 279L714 250M690 240L714 252" />
        <path d="M666 280L711 304" />
      </g>
      <path d="M608 246L655 219M660 220L757 277" stroke="#3339bd" strokeWidth="1" />
      <path fill="#476c18" d="M691 251q9-7 19 0v8l-9 10l-10-10z" /><ellipse cx="700.500" cy="251" rx="9" ry="4" fill="#587e23" />
      <path d="M649 226l7-5l7 5M609 255l9-6M609 298l9-6M648 322l9 10M700 352l11 14l12-14M700 317l11 7l12-7M750 295l10 7M751 330l9-7" fill="none" stroke="#171a24" strokeWidth="1.400" />
      <g stroke="#b1ae22" strokeWidth="4"><path d="M606 245V306M659 280V347M711 305V388M761 278V359" /></g>
      <g stroke="#dad749" strokeWidth="1"><path d="M605 245V306M658 280V347M710 305V388M760 278V359" /></g>
      <Foot x={711} y={391} s={7} /><Foot x={761} y={362} s={7} />
      <path fill="#176fa5" d="M665 333l6-4l12 15l-9 2z" /><path d="M673 326l9 19" stroke="#081018" strokeWidth="5" />
      {/* discharge conveyor */}
      <path d="M757 383l15 29M796 389l-15 20M771 391l10 17" stroke="#1a22a8" strokeWidth="1.700" />
      <path d="M771.500 388v24M780.500 390v18" stroke="#a11aa8" strokeWidth="2.200" /><path d="M773 391l8 3M774 409l12-9" stroke="#111" />
      <Foot x={781} y={410} s={7} /><Foot x={771} y={416} s={9} />
      <path fill="#757575" d="M678 343l13 5l128 41l7 5l-7 9l-132-41z" />
      <path fill="#939393" d="M691 348l128 41l6 4l-134-42z" />
      <path d="M687 355L816 397" stroke="#505050" strokeWidth="1" strokeDasharray="5 2" /><path d="M690 361v25h4" stroke="#777" fill="none" strokeWidth=".9" />
      <path fill="#2d5230" d="M649 387h39v12q-19 11-39 0z" />
      <path fill="url(#steel)" d="M651 350h36v40q-18 10-36 0z" /><ellipse cx="669" cy="351" rx="18" ry="6" fill="#868686" />
      <path d={lattice(807, 820, 412, 438, 12) + lattice(820, 833, 412, 438, 12)} stroke="#1dafb0" strokeWidth="1.300" fill="none" />
      <path d="M806.500 408V437M820 416V443M833.500 408V435" stroke="#122" strokeWidth="1.800" />
      <path fill="#ad1018" d="M806 400l14-4l14 3v11l-14 8l-14-8z" /><path fill="#d33" d="M806 400l14 6l14-6l-14-4z" /><path fill="#8b0c13" d="M820 406l14-6v10l-14 8z" />
      <path d="M810 399l16-5M818 403l12-7M812 397l12-4" stroke="#555" strokeWidth="2" />
      <path fill="#65573c" d="M804 436h4v6h-4zM818 442h4v7h-4zM831 435h4v6h-4z" />
      {/* inclined conveyor */}
      <g stroke="#1a22a8" fill="none">
        <path d="M617 333L583 409" strokeWidth="2" />
        <path d="M561 389l20 21M565 384l18 24" strokeWidth="1.500" /><path d={lattice(570, 581, 370, 406, 9)} strokeWidth="1.500" />
      </g>
      <path d="M569.500 371V402M582 362V408M516 437V446M433 527V538" stroke="#9320a0" strokeWidth="2.200" />
      <Foot x={570} y={405} /><Foot x={582} y={411} s={9} /><Foot x={516} y={449} /><Foot x={433} y={541} />
      <path fill="#3b6048" d="M410 541L661 266L669 273L408 552z" />
      <path fill="#727272" d="M405 538L528 399L557 367L656 263L666 268L539 401L412 537z" />
      <path d="M409 537L533 400L659 266" stroke="#8f8f8f" strokeWidth="2" fill="none" /><path d="M412 538L539 402L664 271" stroke="#555" strokeWidth="1" fill="none" />
      <path d="M414 540L543 404L600 344" stroke="#fff" strokeWidth="4.200" strokeDasharray="4 3.600" fill="none" />
      <path d="M600 344L661 277" stroke="#c9d9d0" strokeWidth="2.500" strokeDasharray="2.400 4" />
      <path d="M407 554L550 400L668 273" stroke="#fff" strokeWidth="1" fill="none" />
      <path d="M407 555L550 401L668 274" stroke="#b5b213" strokeWidth="2" fill="none" /><path d="M406 552L549 398.500L667 271" stroke="#a5a31d" strokeWidth="1.600" fill="none" />
      <path d="M406 553.500L550 399.500L667 272.500" stroke="#e6e36a" strokeWidth="1" fill="none" />
      {/* aggregate bins */}
      <path fill="#4d165c" d="M237 626L258 614L410 541L415 546L272 627z" />
      <path fill="#3b5536" d="M246 626L402 540L408 545L262 627z" />
      <path d="M262 622L404 545" stroke="#fff" strokeWidth="3.400" strokeDasharray="2.800 3" />
      <path d="M243 617L404 530" stroke="#52660f" strokeWidth="2.500" />
      {[0, 1, 2, 3].map((i) => (
        <g key={i} transform={`translate(${i * 37.500} ${-i * 21.300})`}>
          <path fill="#5d5d5d" d="M247 602L287 580L294 592L264 612L256 611z" /><path fill="#7d7d7d" d="M258 605l29-18l5 5l-27 16z" />
          <path d="M260 612l11-9M284 591l10 9M284 603l10-8" stroke="#5f7318" strokeWidth="1.500" />
          <path fill="#fff" d="M279 591l4-2l7 6l-4 2z" />
        </g>
      ))}
      <path d="M239 595l17 8M239 607l17-9M239 608l17 9M241 612l28-15M259 615l18-17" stroke="#617719" strokeWidth="1.500" />
      <path fill="#3a4a07" d="M237 574l5-7l16 8v28l-21-10z" />
      <path fill="#3a4a07" d="M387 497v-13l4-4l16 9v8z" />
      <path fill="#090909" d="M312 543v-13l5-7l15 8v9z" />
      <path fill="#161616" d="M258 574L407 489V521L258 603z" />
      <path d="M258 574L407 489" stroke="#405213" strokeWidth="1" />
      <g fill="none" stroke="#a95e60" strokeWidth="1.700">
        <path d="M237.500 618V573L242 567L257.500 575V626M275 564V552L280 545L294.500 553V607M312 543V530L317 523L332.500 532V586M350 522V510L355 502L370 511V564M387 500V485L391 480L407 489V543" />
      </g>
      <path d="M236 564l-7 5l9 5l11 5l6-3" stroke="#cc2a2a" fill="none" strokeDasharray="5 1" />
      {[[237, 621], [294.500, 610], [332, 589], [370, 567], [407, 546]].map(([x, y]) => <Foot key={x} x={x} y={y} s={7} />)}
    </g>
  );
}

function ViewCube() {
  return (
    <g>
      <ellipse cx="1190" cy="155" rx="40" ry="25" fill="none" stroke="#f9f9f9" strokeWidth="6" />
      <ellipse cx="1190" cy="155" rx="37" ry="22" fill="none" stroke="#f0f0f0" strokeWidth=".8" />
      <g fontFamily="Liberation Sans, sans-serif" fontWeight="bold" fill="#f2f2f2" stroke="#a5a5a5" strokeWidth=".7" textAnchor="middle">
        <text fontSize="12" transform="matrix(.85 -.5 .75 .6 1157 175)">W</text>
        <text fontSize="12" transform="matrix(.85 .5 -.75 .6 1224 175)">S</text>
        <text fontSize="8" transform="matrix(.85 .5 -.7 .5 1166 137)">N</text>
        <text fontSize="8" transform="matrix(.85 -.5 .7 .5 1215 138)">E</text>
      </g>
      <path fill="#eeeeef" d="M1190 112l23 13l-23 12l-23-12z" />
      <path fill="#e2e2e4" d="M1167 125l23 12v27l-22-14z" />
      <path fill="#d9d9dc" d="M1213 125l-23 12v27l22-16z" />
      <path d="M1190 112l23 13l-1 22l-22 17l-22-15l-1-24zM1167 125l23 12l23-12M1190 137v27" fill="none" stroke="#8b8b8e" strokeWidth=".8" />
      <g fontFamily="Liberation Sans, sans-serif" fontWeight="bold" fill="#9a9a9e" textAnchor="middle" fontSize="8">
        <text transform="matrix(.68 -.38 .65 .45 1188 127)">TOP</text>
        <text transform="matrix(.58 .3 0 1.050 1178.500 146)">LEFT</text>
        <text transform="matrix(.6 -.36 0 1.150 1202 147.500)">FRONT</text>
      </g>
    </g>
  );
}

function Viewport() {
  return (
    <div className="relative w-[1240px] shrink-0 bg-white">
      <svg viewBox="6 65 1240 562" className="block h-[562px] w-[1240px]">
        <defs>
          <linearGradient id="steel"><stop offset="0" stopColor="#686868" /><stop offset=".55" stopColor="#8d8d8d" /><stop offset="1" stopColor="#626262" /></linearGradient>
          <linearGradient id="teal"><stop offset="0" stopColor="#064b58" /><stop offset=".5" stopColor="#0a5c6d" /><stop offset="1" stopColor="#054653" /></linearGradient>
          <linearGradient id="blue"><stop offset="0" stopColor="#0505a0" /><stop offset=".5" stopColor="#0808c4" /><stop offset="1" stopColor="#04048c" /></linearGradient>
          <linearGradient id="green"><stop offset="0" stopColor="#088f08" /><stop offset=".35" stopColor="#12d812" /><stop offset="1" stopColor="#069d06" /></linearGradient>
          <linearGradient id="olive"><stop offset="0" stopColor="#283f22" /><stop offset=".6" stopColor="#3b5933" /><stop offset="1" stopColor="#233a1e" /></linearGradient>
          <linearGradient id="cone"><stop offset="0" stopColor="#20371d" /><stop offset="1" stopColor="#344d2b" /></linearGradient>
          <linearGradient id="tank"><stop offset="0" stopColor="#41590a" /><stop offset=".4" stopColor="#799518" /><stop offset="1" stopColor="#425c0d" /></linearGradient>
        </defs>
        <Plant />
        <ViewCube />
        <path d="M6 581L26 592" stroke="#3e9651" strokeWidth="3.500" /><path d="M26 592L50 579" stroke="#9c4a4d" strokeWidth="3.500" /><path d="M26.500 592V566" stroke="#315f98" strokeWidth="3.500" />
        <path d="M25 554.500h7l-7 8h8" fill="none" stroke="#3c70c0" /><path d="M47 568l9 8M56 568l-9 8" stroke="#df6868" />
        <g fill="none" stroke="#696d75"><path d="M1204.500 76.500h7v2.500h-7zM1219.500 71.500h6v6h-6zM1217.500 73.500h6v6h-6zM1231.500 72.500h7v7h-7z" /><path d="M1219 77h3M1232 73l6 6M1238 73l-6 6" strokeWidth="1.500" /></g>
      </svg>
      <div className="absolute left-0 top-[4px] whitespace-nowrap text-[8.400px] leading-[12px] tracking-[-0.400px] text-[#333]">[SW Isometric][Realistic]</div>
    </div>
  );
}

function Cell({ n, className = "" }) {
  return <div className={"flex h-[15px] shrink-0 items-center justify-center " + className}><Icon n={n} /></div>;
}

function Rule() {
  return <div className="my-[1px] h-[2px] w-[13px] shrink-0 self-center bg-[#c9ced5]" />;
}

function RightDock() {
  return (
    <div className="flex grow items-start gap-[2px] overflow-hidden bg-[#3b4453] pl-[2px]">
      <div className="flex h-[152px] w-[17px] shrink-0 flex-col border-2 border-t-0 border-[#2c3441] pt-[6px]">
        <Cell n="layers" /><Rule />
        <Cell n="link" /><Cell n="dwg" /><Cell n="linkG" /><Cell n="linkB" /><Cell n="linkR" /><Cell n="image" />
        <Rule /><Cell n="import" /><Rule /><Cell n="exportI" />
      </div>
      <div className="flex w-[17px] shrink-0 flex-col border-l-2 border-[#2c3441] pt-[6px]">
        <Cell n="hatch" className="mb-[4px]" />
        <Cell n="poly" /><Cell n="redX" /><Rule />
        <Cell n="blueGrid" /><Cell n="blueGrid" /><Cell n="blueStar" /><Cell n="lineX" />
        <Rule /><Cell n="magnet" /><Rule />
        <Cell n="rects" /><Cell n="rectsE" /><Cell n="rectsX" /><Rule />
        <Cell n="textC" />
        <div className="mb-[2px] h-[2px] shrink-0 bg-[#2c3441]" />
        <Cell n="boltGrp" /><Cell n="boltGrpB" /><Cell n="boltS" /><Cell n="nutHex" /><Cell n="washer" />
        <div className="h-[2px] bg-[#2c3441]" />
      </div>
    </div>
  );
}

function LeftStrip() {
  return (
    <div className="flex w-[6px] shrink-0 flex-col items-center justify-end overflow-hidden bg-[#2b3240] pb-[3px]">
      <div className="flex h-[52px] items-center justify-center">
        <span className="whitespace-nowrap text-[8px] leading-[8px] text-[#a4abb7] [writing-mode:vertical-rl] rotate-180">PROPERTIES</span>
      </div>
      <div className="mt-[4px] h-[10px] w-[5px] self-start border border-[#c4dff2] bg-[#5b92bd]" />
    </div>
  );
}

function CommandLine() {
  return (
    <div className="flex h-[40px] shrink-0 border-t-2 border-[#2c3441] bg-[#2b3240]">
      <div className="flex w-[9px] shrink-0 flex-col items-center gap-[7px] pt-[2px]">
        <svg viewBox="0 0 9 30" className="h-[30px] w-[9px]" stroke="#cbd0d7" fill="none"><path d="M1 1h6M1 4h6" strokeDasharray="1 1" /><path d="M0 9l3 5M3 9l-3 5M0 26h4M2 24v4" /></svg>
      </div>
      <div className="flex grow flex-col">
        <div className="h-[25px] whitespace-pre bg-[#c8c8c8] pl-[1px] pt-[3.500px] font-['DejaVu_Sans_Mono',monospace] text-[8.200px] leading-[10px] tracking-[-0.212px] text-[#222]">
          <div>{"Enter an option [2dwireframe/Wireframe/Hidden/Realistic/Conceptual/Shaded/shaded with Edges/shades of Gray/SKetchy/X-ray/Other] <2dwireframe>: _R"}</div>
          <div>Command:</div>
        </div>
        <div className="flex h-[13px] items-center border-t border-[#aaa] bg-white pl-[2px]">
          <svg viewBox="0 0 18 9" className="h-[9px] w-[18px]" fill="none" stroke="#73777d"><path d="M.5 1h10v7H.5z" fill="#eee" /><path d="M2 3l2 1.500L2 6M5 6h3" /><path d="M13 3.500h4l-2 2z" fill="#555" stroke="none" /></svg>
          <span className="ml-[4px] font-['DejaVu_Sans_Mono',monospace] text-[8.200px] italic tracking-[-0.212px] text-[#777]">Type a command</span>
        </div>
      </div>
    </div>
  );
}

function StatusItem({ n, on, className = "w-[16px]" }) {
  return (
    <div className={"flex h-[16px] shrink-0 items-center justify-center " + (on ? "bg-[#5588bd] " : "bg-[#323a49] ") + className}>
      <Icon n={n} className="size-[11px]" />
    </div>
  );
}

function Drop({ className = "w-[12px]" }) {
  return (
    <div className={"flex h-[16px] shrink-0 items-center justify-center bg-[#323a49] " + className}>
      <svg viewBox="0 0 6 4" className="h-[3px] w-[5px]"><path fill="#d3d8df" d="M0 0h6L3 4z" /></svg>
    </div>
  );
}

function StatusBar() {
  return (
    <div className="flex h-[22px] shrink-0 items-start border-b-2 border-[#4c3a39] bg-[#222933] text-[8.400px] tracking-[-0.200px]">
      <div className="flex h-[15px] w-[39px] items-center justify-center rounded-b-[5px] bg-[#3b4453] font-semibold text-white">Model</div>
      <div className="ml-[2px] flex h-[15px] w-[41px] items-center justify-center rounded-b-[5px] bg-[#2c3441] text-[#b9bfc9]">Layout1</div>
      <div className="ml-[2px] flex h-[15px] w-[18px] items-center justify-center rounded-b-[5px] bg-[#2c3441] text-[11px] text-[#b9bfc9]">+</div>
      <div className="flex h-[21px] grow items-center justify-end overflow-hidden text-[#e2e5e9]">
        <div className="mr-[1px] flex h-[16px] w-[31px] items-center justify-center bg-[#323a49] tracking-[-0.350px]">MODEL</div>
        <StatusItem n="modelMap" className="w-[17px]" />
        <StatusItem n="dyn" on className="ml-px w-[15px]" />
        <StatusItem n="ortho" className="ml-px w-[16px]" />
        <StatusItem n="polar" className="w-[16px]" /><Drop />
        <StatusItem n="iso" className="w-[15px]" /><Drop />
        <StatusItem n="angle" on className="w-[15px]" />
        <StatusItem n="osnap" on className="ml-px w-[15px]" /><Drop />
        <StatusItem n="lines" className="w-[16px]" />
        <StatusItem n="sel" className="ml-px w-[18px]" />
        <StatusItem n="anno" on className="ml-px w-[15px]" />
        <StatusItem n="gear" className="ml-px w-[17px]" /><Drop />
        <StatusItem n="plus" className="ml-px w-[15px]" />
        <StatusItem n="scaleV" className="ml-px w-[20px]" />
        <div className="flex h-[16px] w-[36px] items-center justify-center bg-[#323a49] tracking-[-0.350px]">Decimal</div>
        <Drop className="w-[13px]" />
        <StatusItem n="triCirc" on className="ml-px w-[15px]" />
        <StatusItem n="blocks" className="ml-px w-[17px]" />
        <StatusItem n="lockT" className="w-[17px]" />
        <StatusItem n="clip" on className="w-[15px]" />
        <StatusItem n="hw" className="ml-px w-[18px]" />
        <StatusItem n="menu" className="w-[12px]" />
      </div>
    </div>
  );
}

export default function App() {
  return (
    <div className="flex h-[690px] w-[1280px] flex-col overflow-hidden bg-[#3b4453] font-['Noto_Sans',sans-serif]">
      <TitleBar />
      <TabBar />
      <div className="flex h-[39px] shrink-0 flex-col border-b border-[#8d949e]">
        <ToolRowOne />
        <ToolRowTwo />
      </div>
      <div className="flex h-[562px] shrink-0">
        <LeftStrip />
        <Viewport />
        <RightDock />
      </div>
      <CommandLine />
      <StatusBar />
    </div>
  );
}
